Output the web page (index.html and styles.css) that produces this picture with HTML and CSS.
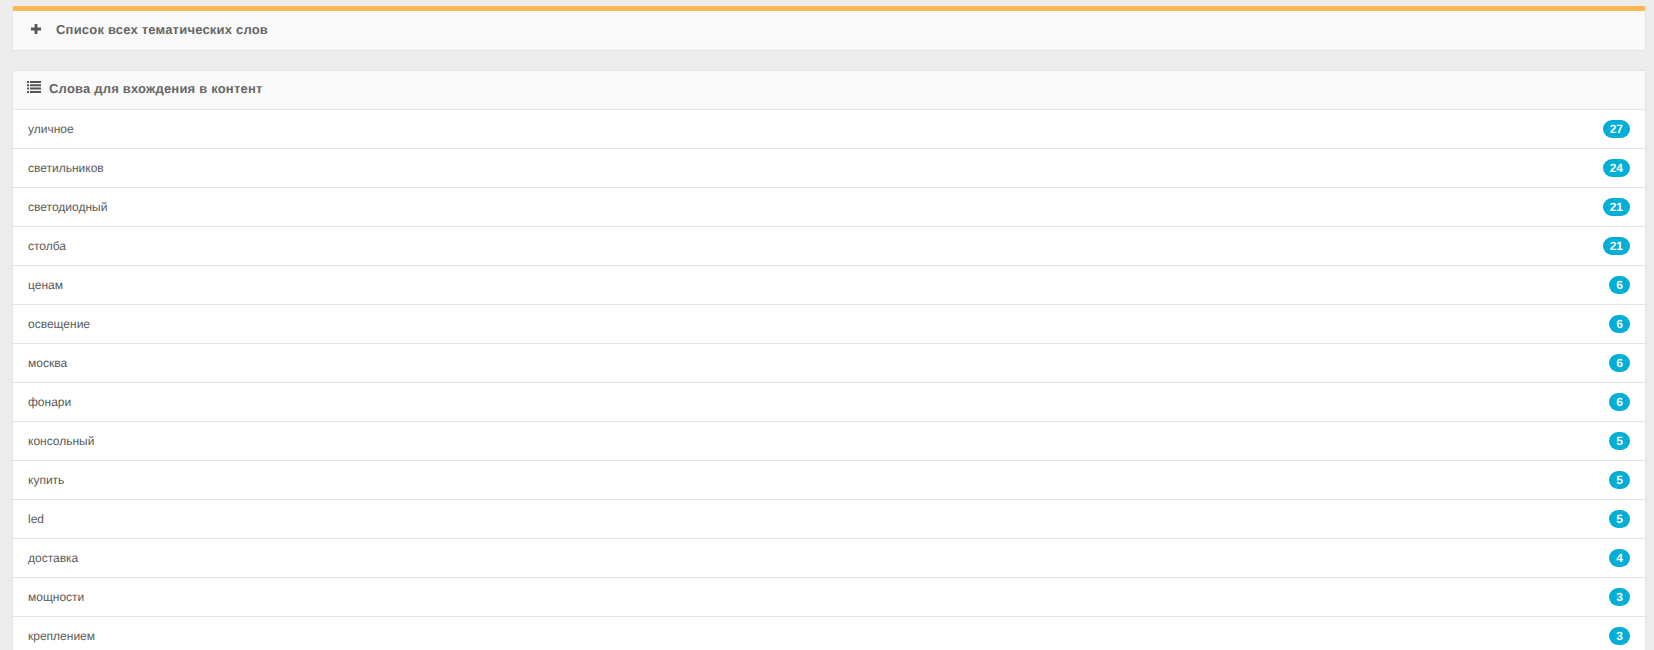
FILE: index.html
```html
<!DOCTYPE html>
<html lang="en">
<head>
  <meta charset="UTF-8">
  <meta name="viewport" content="width=device-width, initial-scale=1.0">
  <title>Слова для вхождения в контент</title>
  <link rel="stylesheet" href="styles.css">
</head>
<body>
  <div class="box box-warning">
    <div class="box-header box-header-collapsed">
      <svg class="icon-plus" width="10" height="10" viewBox="0 0 10 10"><path d="M3.6 0h2.8v3.6H10v2.8H6.4V10H3.6V6.4H0V3.6h3.6z" fill="#555"/></svg>
      <h3 class="box-title">Список всех тематических слов</h3>
    </div>
  </div>
  <div class="box">
    <div class="box-header box-header-list">
      <svg class="icon-list" width="14" height="12" viewBox="0 0 14 12"><path d="M0 0h2v2H0zM3 0h11v2H3zM0 3.3h2v2H0zM3 3.3h11v2H3zM0 6.6h2v2H0zM3 6.6h11v2H3zM0 9.9h2v2H0zM3 9.9h11v2H3z" fill="#555"/></svg>
      <h3 class="box-title">Слова для вхождения в контент</h3>
    </div>
    <ul class="word-list">
      <li class="word-item"><span>уличное</span><span class="badge">27</span></li>
      <li class="word-item"><span>светильников</span><span class="badge">24</span></li>
      <li class="word-item"><span>светодиодный</span><span class="badge">21</span></li>
      <li class="word-item"><span>столба</span><span class="badge">21</span></li>
      <li class="word-item"><span>ценам</span><span class="badge">6</span></li>
      <li class="word-item"><span>освещение</span><span class="badge">6</span></li>
      <li class="word-item"><span>москва</span><span class="badge">6</span></li>
      <li class="word-item"><span>фонари</span><span class="badge">6</span></li>
      <li class="word-item"><span>консольный</span><span class="badge">5</span></li>
      <li class="word-item"><span>купить</span><span class="badge">5</span></li>
      <li class="word-item"><span>led</span><span class="badge">5</span></li>
      <li class="word-item"><span>доставка</span><span class="badge">4</span></li>
      <li class="word-item"><span>мощности</span><span class="badge">3</span></li>
      <li class="word-item"><span>креплением</span><span class="badge">3</span></li>
    </ul>
  </div>
</body>
</html>
```

FILE: styles.css
```css
html, body {
  height: 100%;
  overflow: hidden;
}
body {
  margin: 0;
  padding: 6px 8px 0 12px;
  box-sizing: border-box;
  background: #ededed;
  font-family: 'Liberation Sans', Arial, sans-serif;
  font-size: 12px;
  color: #5a5a5a;
  text-rendering: geometricPrecision;
}
.box {
  background: #fff;
  border: 1px solid #e4e4e4;
  border-radius: 3px;
  margin-bottom: 19px;
}
.box-warning {
  border-top: 5px solid #fdb654;
}
.box-header {
  display: flex;
  align-items: center;
  box-sizing: border-box;
  height: 38px;
  padding-left: 14px;
  background: #fafafa;
  border-bottom: 1px solid #e4e4e4;
}
.box-header-collapsed {
  height: 39px;
  padding-left: 18px;
  padding-bottom: 3px;
  border-bottom: 0;
}
.box-header-list {
  height: 39px;
  padding-bottom: 4px;
}
.box-title {
  margin: 0;
  font-size: 13px;
  font-weight: bold;
  letter-spacing: 0.2px;
  color: #666;
}
.icon-plus {
  margin-right: 15px;
}
.icon-list {
  margin-right: 8px;
  margin-bottom: 2px;
}
.word-list {
  list-style: none;
  margin: 0;
  padding: 0;
}
.word-item {
  display: flex;
  align-items: center;
  justify-content: space-between;
  height: 38px;
  padding: 0 15px;
  border-bottom: 1px solid #e4e4e4;
}
.badge {
  min-width: 7px;
  padding: 3px 7px;
  border-radius: 10px;
  background: #00aed6;
  color: #fff;
  font-size: 12px;
  font-weight: bold;
  line-height: 12px;
  text-align: center;
}
```
